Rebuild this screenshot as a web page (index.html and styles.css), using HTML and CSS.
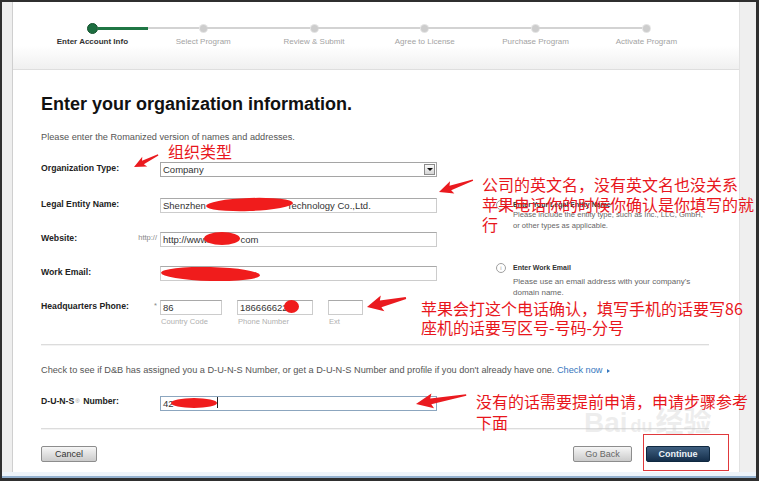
FILE: index.html
```html
<!DOCTYPE html>
<html lang="en">
<head>
  <meta charset="UTF-8">
  <meta name="viewport" content="width=device-width, initial-scale=1.0">
  <title>Enter Account Info</title>
  <link rel="stylesheet" href="styles.css">
</head>
<body>
  <div class="window">
    <div class="screen">
      <div class="gutter-left"></div>
      <div class="main">
        <div class="steps">
          <div class="step current">
            <div class="track"><span class="seg blank"></span><span class="dot"></span><span class="seg done"></span></div>
            <div class="step-label">Enter Account Info</div>
          </div>
          <div class="step">
            <div class="track"><span class="seg"></span><span class="dot"></span><span class="seg"></span></div>
            <div class="step-label">Select Program</div>
          </div>
          <div class="step">
            <div class="track"><span class="seg"></span><span class="dot"></span><span class="seg"></span></div>
            <div class="step-label">Review &amp; Submit</div>
          </div>
          <div class="step">
            <div class="track"><span class="seg"></span><span class="dot"></span><span class="seg"></span></div>
            <div class="step-label">Agree to License</div>
          </div>
          <div class="step">
            <div class="track"><span class="seg"></span><span class="dot"></span><span class="seg"></span></div>
            <div class="step-label">Purchase Program</div>
          </div>
          <div class="step">
            <div class="track"><span class="seg"></span><span class="dot"></span><span class="seg blank"></span></div>
            <div class="step-label">Activate Program</div>
          </div>
        </div>

        <div class="content">
          <h1>Enter your organization information.</h1>
          <p class="intro">Please enter the Romanized version of names and addresses.</p>

          <div class="form-row row-first">
            <div class="label-col"><span class="label">Organization Type:</span></div>
            <div class="select">
              <span>Company</span>
              <span class="select-btn"></span>
            </div>
          </div>

          <div class="form-row">
            <div class="label-col"><span class="label">Legal Entity Name:</span></div>
            <div class="field">Shenzhen<span class="scribble scribble-name"></span>Technology Co.,Ltd.</div>
            <div class="help help-name">
              <span class="help-icon">i</span>
              <div>
                <div class="help-title">Enter Your Legal Entity Name</div>
                <div class="help-text">Please include the entity type, such as Inc., LLC, GmbH,<br>or other types as applicable.</div>
              </div>
            </div>
          </div>

          <div class="form-row">
            <div class="label-col"><span class="label">Website:</span><span class="prefix">http://</span></div>
            <div class="field">http://www.<span class="scribble scribble-site"></span>com</div>
          </div>

          <div class="form-row">
            <div class="label-col"><span class="label">Work Email:</span></div>
            <div class="field"><span class="scribble scribble-mail"></span></div>
            <div class="help help-mail">
              <span class="help-icon">i</span>
              <div>
                <div class="help-title">Enter Work Email</div>
                <div class="help-text">Please use an email address with your company's<br>domain name.</div>
              </div>
            </div>
          </div>

          <div class="form-row row-phone">
            <div class="label-col"><span class="label">Headquarters Phone:</span><span class="prefix">*</span></div>
            <div class="phone-group">
              <div class="phone-part">
                <div class="field field-country">86</div>
                <div class="sublabel">Country Code</div>
              </div>
              <div class="phone-part">
                <div class="field field-number">186666622<span class="scribble scribble-dot"></span></div>
                <div class="sublabel">Phone Number</div>
              </div>
              <div class="phone-part">
                <div class="field field-ext"></div>
                <div class="sublabel">Ext</div>
              </div>
            </div>
          </div>

          <div class="divider"></div>

          <p class="duns-note">Check to see if D&amp;B has assigned you a D-U-N-S Number, or get a D-U-N-S Number and profile if you don't already have one. <a class="check-link">Check now <span class="check-arrow"></span></a></p>

          <div class="form-row row-duns">
            <div class="label-col"><span class="label">D-U-N-S<sup>®</sup> Number:</span></div>
            <div class="field field-focus">42<span class="scribble scribble-duns"></span><span class="caret"></span></div>
          </div>

          <div class="divider"></div>

          <div class="actions">
            <button class="btn">Cancel</button>
            <div class="actions-right">
              <button class="btn btn-back">Go Back</button>
              <button class="btn btn-primary">Continue</button>
            </div>
          </div>
        </div>
      </div>
      <div class="gutter-right"></div>
    </div>
    <div class="status"></div>

    <!-- annotations drawn on top of the screenshot -->
    <svg class="arrows" width="759" height="481" viewBox="0 0 759 481">
      <g fill="#ea1a1f">
        <polygon transform="translate(134 167) rotate(-26.6)" points="0,0 12,-5.5 10,-2 27,-0.6 27,0.6 10,2 12,5.5"/>
        <polygon transform="translate(439 192) rotate(-19.4)" points="0,0 14,-6.5 12,-2.5 36,-0.7 36,0.7 12,2.5 14,6.5"/>
        <polygon transform="translate(367 307) rotate(-13)" points="0,0 16,-8 14,-3.5 40,-1 40,1 14,3.5 16,8"/>
        <polygon transform="translate(416 404) rotate(-10.2)" points="0,0 17,-7.5 15,-3 51,-0.7 51,0.7 15,3 17,7.5"/>
      </g>
    </svg>
    <div class="note note-type">组织类型</div>
    <div class="note note-name">公司的英文名，没有英文名也没关系<br>苹果电话你的时候你确认是你填写的就<br>行</div>
    <div class="note note-phone">苹果会打这个电话确认，填写手机的话要写86<br>座机的话要写区号-号码-分号</div>
    <div class="note note-duns">没有的话需要提前申请，申请步骤参考<br>下面</div>
    <div class="watermark">Bai<span class="paw">du</span>经验</div>
    <div class="highlight-box"></div>
  </div>
</body>
</html>
```

FILE: styles.css
```css
body {
  margin: 0;
  background-color: #2f2f2f;
  font-family: "Liberation Sans", Arial, sans-serif;
}

.window {
  position: relative;
  width: 759px;
  height: 481px;
  box-sizing: border-box;
  padding: 2px 3px 3px 2px;
  display: flex;
  flex-direction: column;
  overflow: hidden;
}

.screen {
  flex: 1;
  display: flex;
  min-height: 0;
}

.gutter-left {
  width: 10px;
  background-color: #eeeeee;
  border-right: 1px solid #cfcfcf;
}

.gutter-right {
  width: 16px;
  background-color: #efefef;
  border-left: 1px solid #e2e2e2;
}

.main {
  flex: 1;
  background: #ffffff;
  display: flex;
  flex-direction: column;
}

.status {
  height: 6px;
  background: linear-gradient(#eef4fa 0, #eef4fa 60%, #94b1cf 60%);
}

/* progress steps */
.steps {
  height: 67px;
  padding-left: 24px;
  display: flex;
  border-bottom: 1px solid #dedede;
  background: linear-gradient(#ffffff 0, #ffffff 65%, #f0f0f0 100%);
}

.step {
  width: 110.8px;
}

.track {
  display: flex;
  align-items: center;
  height: 10px;
  margin-top: 21px;
}

.seg {
  flex: 1;
  height: 2px;
  background-color: #d3d3d3;
}

.seg.blank {
  visibility: hidden;
}

.seg.done {
  background-color: #1f7644;
  height: 3px;
}

.dot {
  width: 7px;
  height: 7px;
  border-radius: 50%;
  background-color: #cdcdcd;
  box-shadow: 0 0 0 1px #e4e4e4;
}

.current .dot {
  width: 9px;
  height: 9px;
  background-color: #1d6e40;
  border: 1px solid #14522e;
  box-shadow: none;
}

.step-label {
  margin-top: 4px;
  text-align: center;
  font-size: 8px;
  line-height: 10px;
  color: #a3a3a3;
}

.current .step-label {
  color: #333;
  font-weight: bold;
}

/* form */
.content {
  padding: 23px 29px 0 28px;
}

h1 {
  margin: 0;
  font-size: 18px;
  line-height: 22px;
  color: #111;
}

.intro {
  margin: 16px 0 0;
  font-size: 9.2px;
  line-height: 12px;
  color: #555;
}

.form-row {
  display: flex;
  align-items: flex-start;
  height: 34px;
}

.row-first {
  margin-top: 19px;
  height: 36px;
}

.row-phone {
  height: 27px;
}

.row-duns {
  height: 15px;
  margin-top: 20px;
}

.label-col {
  width: 119px;
  flex-shrink: 0;
  display: flex;
  justify-content: space-between;
  line-height: 12px;
}

.row-duns .label-col {
  margin-top: -1px;
}

.label {
  font-size: 8.7px;
  font-weight: bold;
  color: #222;
}

.label sup {
  font-size: 6px;
  font-weight: normal;
  color: #999;
  vertical-align: 1px;
  margin: 0 1px;
}

.prefix {
  margin-right: 3px;
  font-size: 7.5px;
  color: #888;
}

.field,
.select {
  width: 277px;
  height: 15px;
  box-sizing: border-box;
  border: 1px solid #cccccc;
  border-top-color: #a9a9a9;
  padding-left: 2px;
  font-size: 9.5px;
  line-height: 13px;
  color: #333;
  white-space: nowrap;
  flex-shrink: 0;
}

.select {
  display: flex;
  justify-content: space-between;
  align-items: center;
  border-color: #a5a5a5;
}

.select-btn {
  width: 11px;
  height: 11px;
  box-sizing: border-box;
  margin-right: 1px;
  border: 1px solid #8b8b8b;
  background: linear-gradient(#fafafa, #d6d6d6);
  display: flex;
  align-items: center;
  justify-content: center;
}

.select-btn::after {
  content: "";
  border-left: 3px solid transparent;
  border-right: 3px solid transparent;
  border-top: 3px solid #111;
}

.field-focus {
  border-color: #8ca6bf;
}

.scribble {
  display: inline-block;
  position: relative;
  z-index: 1;
  vertical-align: middle;
  background-color: #f01c1c;
  border-radius: 50%;
}

.scribble-name {
  width: 87px;
  height: 13px;
  margin: -3px -6px 0 0;
  transform: rotate(-2deg);
}

.scribble-site {
  width: 36px;
  height: 13px;
  margin: -3px 0 0 -5px;
}

.scribble-mail {
  width: 99px;
  height: 14px;
  margin: -1px 0 0 -2px;
  transform: rotate(1.5deg);
}

.scribble-dot {
  width: 15px;
  height: 13px;
  margin: -3px 0 0 -4px;
}

.scribble-duns {
  width: 46px;
  height: 10px;
  margin: -3px 0 0 -3px;
}

.caret {
  display: inline-block;
  width: 1px;
  height: 11px;
  vertical-align: middle;
  margin-top: -3px;
  background-color: #222;
}

/* help column */
.help {
  display: flex;
  align-items: flex-start;
  gap: 7px;
  margin-left: 59px;
  font-size: 8px;
  color: #666;
}

.help-name {
  margin-top: 1px;
}

.help-name .help-text {
  font-size: 7.6px;
}

.help-mail {
  margin-top: -4.5px;
}

.help-icon {
  width: 8px;
  height: 8px;
  margin-top: 1px;
  border: 1px solid #a0a0a0;
  border-radius: 50%;
  font-size: 6px;
  line-height: 8px;
  text-align: center;
  color: #999;
}

.help-title {
  font-size: 7px;
  font-weight: bold;
  line-height: 11px;
  color: #333;
}

.help-text {
  line-height: 10.6px;
  white-space: nowrap;
}

.help-mail .help-text {
  margin-top: 3px;
  line-height: 11px;
}

/* phone */
.phone-group {
  display: flex;
  gap: 15px;
}

.field-country {
  width: 62px;
}

.field-number {
  width: 76px;
}

.field-ext {
  width: 35px;
}

.sublabel {
  margin-top: 2px;
  padding-left: 1px;
  font-size: 7.6px;
  line-height: 10px;
  color: #b0b0b0;
}

.divider {
  margin: 17px 1px 0 0;
  height: 1px;
  background-color: #dcdcdc;
  box-shadow: 0 1px 0 #f3f3f3;
}

.duns-note {
  margin: 19px 0 0;
  font-size: 9.2px;
  line-height: 12px;
  color: #555;
}

.check-link {
  color: #3576bd;
}

.check-arrow {
  display: inline-block;
  margin-left: 2px;
  border-top: 2.5px solid transparent;
  border-bottom: 2.5px solid transparent;
  border-left: 3px solid #3576bd;
}

/* buttons */
.actions {
  display: flex;
  justify-content: space-between;
  margin-top: 17px;
}

.actions-right {
  display: flex;
  gap: 14px;
}

.btn {
  width: 56px;
  height: 16px;
  padding: 0;
  border: 1px solid #8d8d8d;
  border-radius: 2px;
  background: linear-gradient(#f6f6f6, #cbcbcb);
  font-family: "Liberation Sans", Arial, sans-serif;
  font-size: 9px;
  color: #333;
}

.btn-back {
  width: 59px;
  color: #666;
}

.btn-primary {
  width: 64px;
  border-color: #0f2840;
  background: linear-gradient(#3f5f80, #152f4b);
  color: #eef3f8;
  font-weight: bold;
}

/* annotations */
.arrows {
  position: absolute;
  top: 0;
  left: 0;
  pointer-events: none;
}

.note {
  position: absolute;
  font-family: "Noto Sans CJK SC", sans-serif;
  font-size: 16px;
  line-height: 20px;
  color: #e8161c;
  white-space: nowrap;
}

.note-type {
  left: 168px;
  top: 141px;
}

.note-name {
  left: 482px;
  top: 174px;
}

.note-phone {
  left: 421px;
  top: 299px;
  line-height: 18.5px;
}

.note-duns {
  left: 476px;
  top: 391px;
  line-height: 20.5px;
}

.watermark {
  position: absolute;
  left: 584px;
  top: 406px;
  font-family: "Liberation Sans", "Noto Sans CJK SC", sans-serif;
  font-size: 28px;
  font-weight: bold;
  line-height: 34px;
  color: rgba(205, 205, 205, 0.35);
  white-space: nowrap;
}

.paw {
  font-size: 18px;
  margin: 0 3px;
}

.highlight-box {
  position: absolute;
  left: 643px;
  top: 434px;
  width: 84px;
  height: 35px;
  border: 1px solid #e0393c;
}
```
